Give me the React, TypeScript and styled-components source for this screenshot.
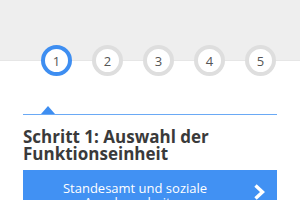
import styled, { createGlobalStyle } from 'styled-components'

const GlobalStyle = createGlobalStyle`
    html, body {
        margin: 0;
        padding: 0;
        background: #ffffff;
        font-family: "Open Sans", "Liberation Sans", sans-serif;
    }
`;

const Page = styled.div`
    width: 300px;
    height: 200px;
    overflow: hidden;
    background: #ffffff;
`;

const Header = styled.div`
    height: 60px;
    background: #eeeeee;
    border-bottom: 1px solid #e6e6e6;
`;

const Content = styled.div`
    padding: 0 23px;
`;

const Steps = styled.ol`
    list-style: none;
    margin: -16px 0 0 0;
    padding: 0 0 0 18px;
    display: flex;
    gap: 20px;
`;

const Step = styled.li<{ $active: boolean }>`
    width: 31px;
    height: 31px;
    box-sizing: border-box;
    border-radius: 50%;
    border: 4.5px solid ${(props) => (props.$active ? "#3e8ef1" : "#dedede")};
    background: #ffffff;
    display: flex;
    align-items: center;
    justify-content: center;
    font-size: 13px;
    color: #555555;
`;

const Track = styled.div`
    position: relative;
    margin-top: 30px;
    height: 8px;
    border-bottom: 1px solid #6aa9f5;
`;

const Pointer = styled.span`
    position: absolute;
    left: 18px;
    bottom: 0;
    width: 0;
    height: 0;
    border-left: 7.5px solid transparent;
    border-right: 7.5px solid transparent;
    border-bottom: 8px solid #3e8ef1;
`;

const Title = styled.h2`
    margin: 13px 0 0 0;
    font-size: 17px;
    line-height: 17px;
    font-weight: 700;
    color: #3a3a3a;
`;

const Choice = styled.button`
    margin-top: 8px;
    width: 100%;
    min-height: 50px;
    border: 0;
    border-radius: 0;
    background: #4191f3;
    color: #ffffff;
    font-family: inherit;
    font-size: 13px;
    line-height: 14px;
    padding: 10px 40px 10px 10px;
    position: relative;
    text-align: center;
    cursor: pointer;
`;

const Chevron = styled.svg`
    position: absolute;
    right: 11px;
    top: 13px;
`;

export default function App() {
    const steps = [1, 2, 3, 4, 5];

    return (
        <>
            <GlobalStyle />
            <Page>
                <Header />
                <Content>
                    <Steps>
                        {steps.map((n) => (
                            <Step key={n} $active={n === 1}>{n}</Step>
                        ))}
                    </Steps>
                    <Track>
                        <Pointer />
                    </Track>
                    <Title>Schritt 1: Auswahl der Funktionseinheit</Title>
                    <Choice>
                        Standesamt und soziale Angelegenheiten
                        <Chevron width="13" height="18" viewBox="0 0 13 18">
                            <path d="M2.5 2.5 L9.5 9 L2.5 15.5" fill="none" stroke="#ffffff" strokeWidth="3.4" />
                        </Chevron>
                    </Choice>
                </Content>
            </Page>
        </>
    );
}
